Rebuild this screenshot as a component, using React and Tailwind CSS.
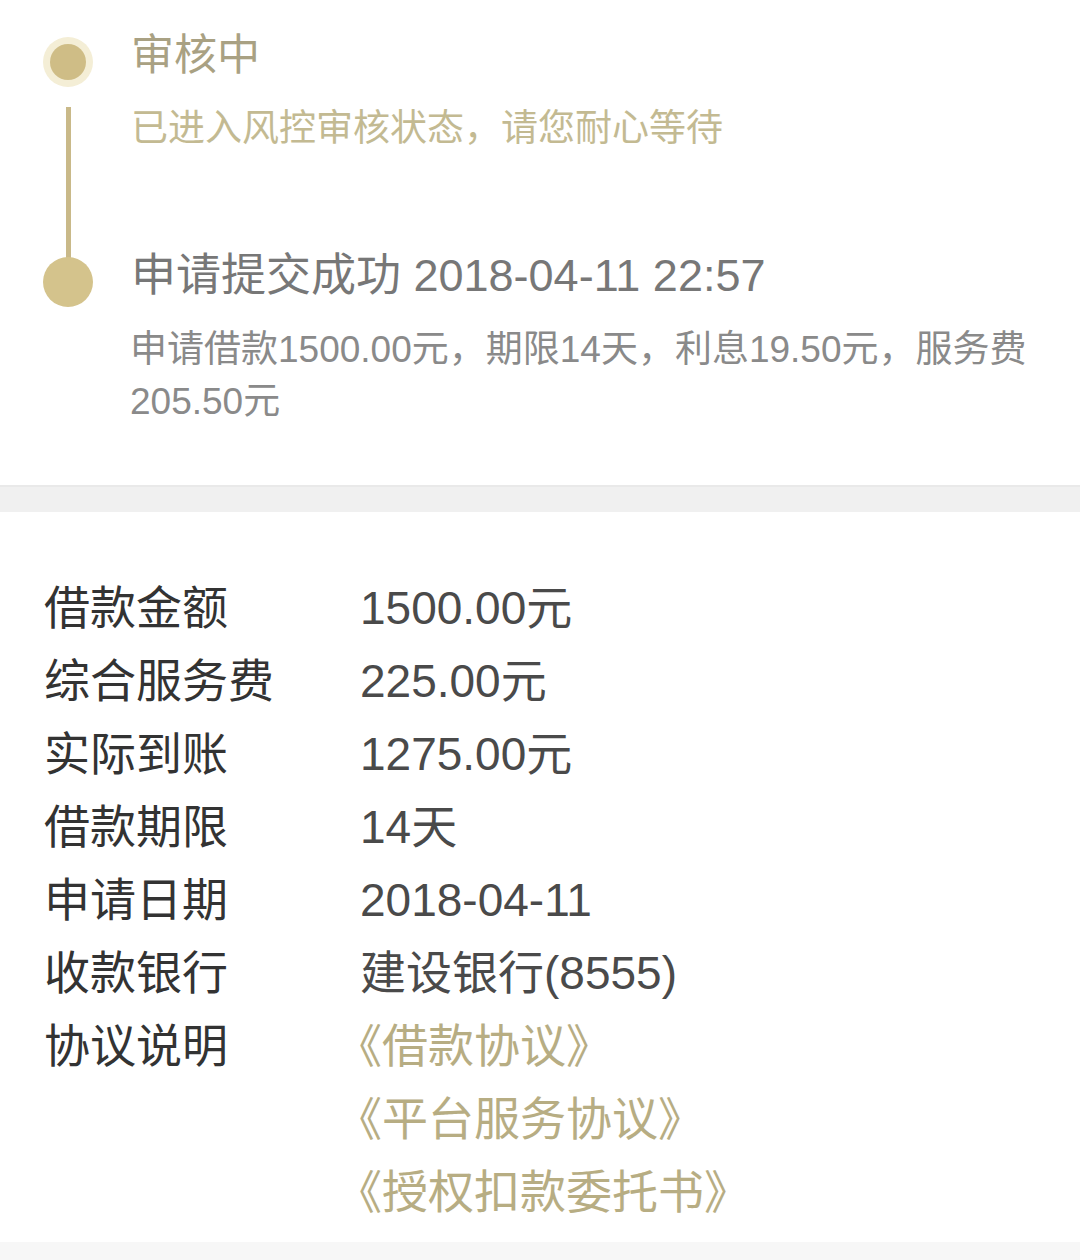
const rows = [
  ['借款金额', '1500.00元'],
  ['综合服务费', '225.00元'],
  ['实际到账', '1275.00元'],
  ['借款期限', '14天'],
  ['申请日期', '2018-04-11'],
  ['收款银行', '建设银行(8555)'],
]

const links = ['《借款协议》', '《平台服务协议》', '《授权扣款委托书》']

export default function App() {
  return (
    <div className="w-[1080px] h-[1260px] bg-white overflow-hidden flex flex-col font-['Liberation_Sans','Noto_Sans_CJK_SC',sans-serif]">
      {/* progress timeline */}
      <div className="flex pb-[57px]">
        <div className="w-[136px] flex flex-col items-center pt-[37px]">
          <div className="w-[50px] h-[50px] rounded-full bg-[#f4eed6] flex items-center justify-center">
            <div className="w-[36px] h-[36px] rounded-full bg-[#cfbd86]" />
          </div>
          <div className="w-[5px] h-[152px] mt-[20px] bg-[#c9b989]" />
          <div className="w-[50px] h-[50px] -mt-[2px] rounded-full bg-[#d4c38c]" />
        </div>
        <div className="flex-1 -ml-[5px] pt-[30px] pr-[40px]">
          <div className="text-[43px] leading-[50px] text-[#a9a183]">审核中</div>
          <div className="mt-[24px] text-[37px] leading-[50px] text-[#c3ba92]">已进入风控审核状态，请您耐心等待</div>
          <div className="mt-[97px] text-[45px] leading-[50px] text-[#777777]">申请提交成功 2018-04-11 22:57</div>
          <div className="mt-[23px] text-[37px] leading-[52px] text-[#8a8a8a] -ml-[1px]">
            申请借款1500.00元，期限14天，利息19.50元，服务费<br />205.50元
          </div>
        </div>
      </div>

      <div className="h-[27px] bg-[#f0f0f0] border-t-2 border-[#e9e9e9]" />

      {/* loan details */}
      <div className="flex-1 pt-[60px] px-[44px]">
        {rows.map(([label, value]) => (
          <div key={label} className="flex text-[46px] leading-[73px]">
            <div className="w-[316px] text-[#333333]">{label}</div>
            <div className="text-[#4a4a4a]">{value}</div>
          </div>
        ))}
        <div className="flex text-[46px] leading-[73px]">
          <div className="w-[316px] text-[#333333]">协议说明</div>
          <div className="flex flex-col text-[#b7ad83] -ml-[24px]">
            {links.map((l) => (
              <span key={l}>{l}</span>
            ))}
          </div>
        </div>
      </div>

      <div className="h-[18px] bg-[#f7f7f7]" />
    </div>
  )
}
